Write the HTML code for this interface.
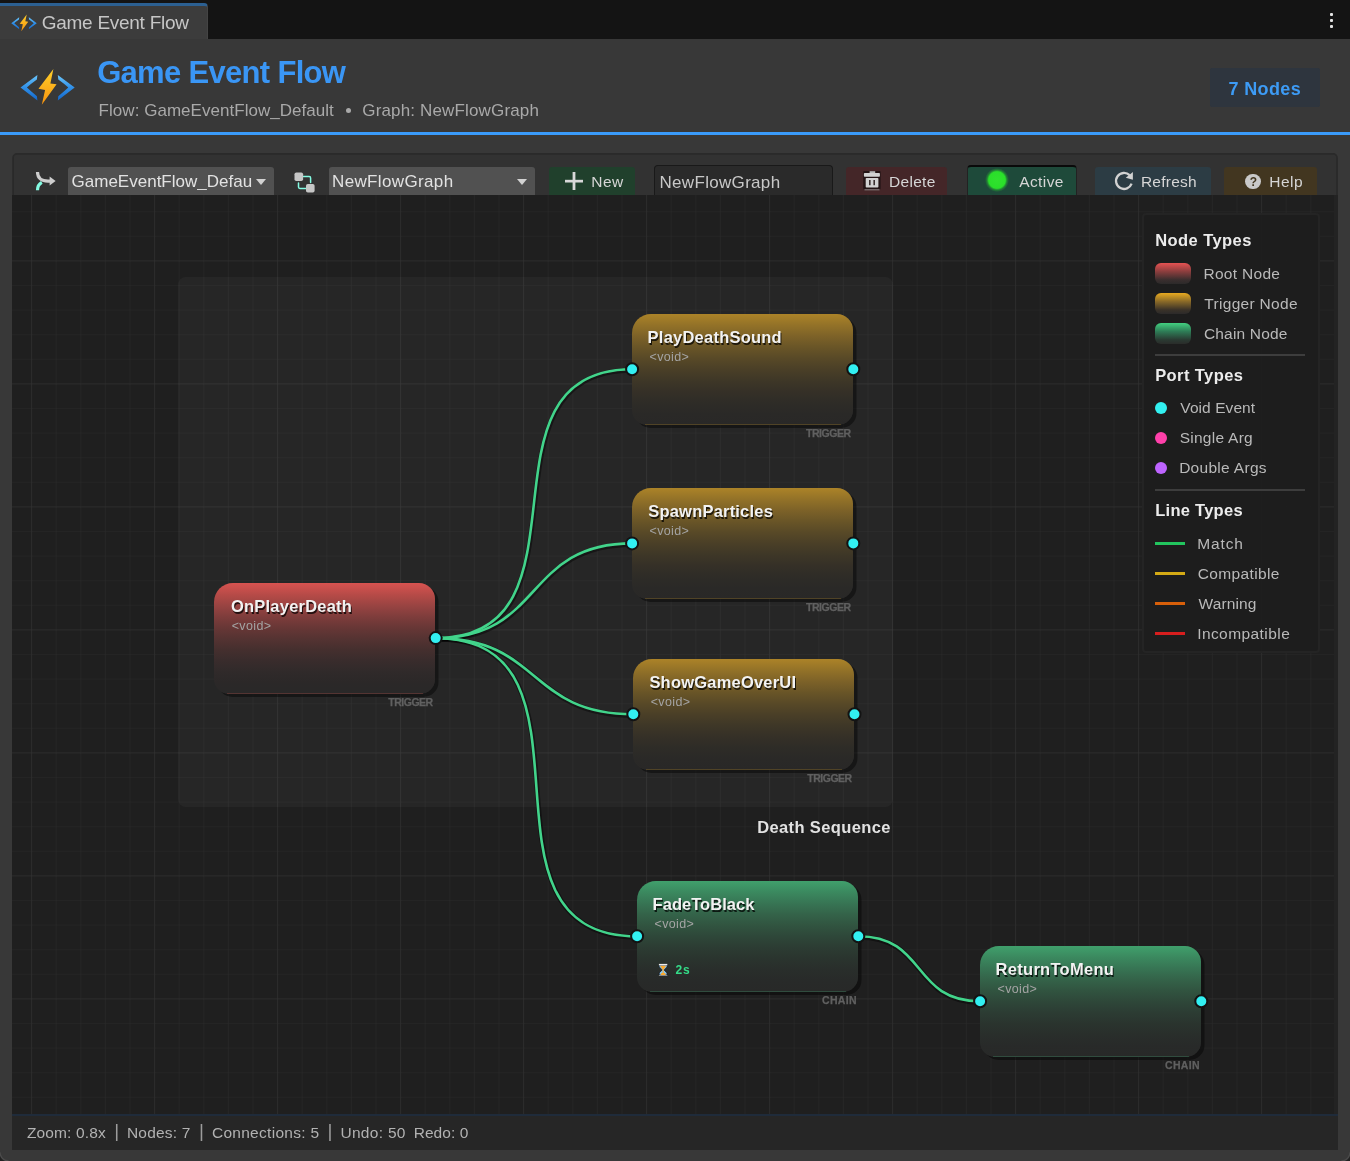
<!DOCTYPE html>
<html><head><meta charset="utf-8"><title>Game Event Flow</title>
<style>
*{box-sizing:border-box;margin:0;padding:0}
html,body{width:1350px;height:1161px;overflow:hidden;background:#383838;font-family:"Liberation Sans", sans-serif;}
#root{position:absolute;left:0;top:0;width:1350px;height:1161px;will-change:transform}
.abs{position:absolute}
.t{position:absolute;white-space:pre;line-height:1}
#tabbar{position:absolute;left:0;top:0;width:1350px;height:39px;background:#141414}
#tab{position:absolute;left:0;top:3px;width:208px;height:36px;background:#3c3c3c;border-top:3px solid #2c6092;border-right:1px solid #444;border-top-right-radius:4px}
#blue{position:absolute;left:0;top:132px;width:1350px;height:3px;background:#3a9bfa}
#badge{position:absolute;left:1210px;top:68px;width:110px;height:39px;background:#2e353e;border-radius:2px}
#panel{position:absolute;left:12.2px;top:153px;width:1325.7px;height:60px;background:#323232;border:1.7px solid #2a2a2a;border-bottom:none;border-radius:4.5px 4.5px 0 0}
#canvas{position:absolute;left:12.2px;top:194.8px;width:1325.9px;height:920px;background-color:#1f1f1f;overflow:hidden;border-right:4px solid #232323}
#status{position:absolute;left:12px;top:1114px;width:1326px;height:36px;background:#262626;border-top:2px solid #1f2b3a}
#group{position:absolute;left:178px;top:277px;width:715px;height:530px;background:rgba(255,255,255,0.035);border-radius:8px}
.node{position:absolute;width:221px;height:111px;border-radius:19px 16px 15px 15px;box-shadow:3.5px 3px 0.6px rgba(0,0,0,0.42)}
.nb{position:absolute;left:13px;right:12.5px;bottom:0;height:1px}
.port{position:absolute;width:15px;height:15px;border-radius:50%;background:#30f0f2;border:2.2px solid #131313}
.edges{position:absolute;left:0;top:0}
#legend{position:absolute;left:1142px;top:213px;width:178px;height:440px;background:rgba(29,29,29,0.93);border:2px solid #242424;border-radius:4px}
.sw{position:absolute;left:1155px;width:36px;height:21px;border-radius:6px}
.dot{position:absolute;left:1155px;width:12.4px;height:12.4px;border-radius:50%}
.ln{position:absolute;left:1155px;width:30px;height:3px}
.sep{position:absolute;left:1155px;width:150px;height:2px;background:#3d3d3d}
.btn{position:absolute;top:167px;height:28px;border-radius:3px 3px 0 0}
.bar{position:absolute;top:1123px;width:1.6px;height:18px;background:#a0a0a0}
</style></head><body><div id="root">
<div id="tabbar"></div>
<div id="tab"></div>
<svg style="position:absolute;left:11.0px;top:13.5px" width="26" height="17.7" viewBox="20.5 68 55.2 37.6">
<defs>
<linearGradient id="sb" x1="0" y1="0" x2="0" y2="1"><stop offset="0" stop-color="#ffd02a"/><stop offset="1" stop-color="#f7930f"/></linearGradient>
<linearGradient id="sc" x1="0" y1="0" x2="0" y2="1"><stop offset="0" stop-color="#6cc6fa"/><stop offset="0.5" stop-color="#2f8fe8"/><stop offset="1" stop-color="#1466c8"/></linearGradient>
</defs>
<path fill="url(#sc)" d="M37.9,75.1 L21,87.6 L37.9,100.6 L37.4,96.2 Q31,91 27.4,87.6 Q31,84.2 37.4,79.6 Z"/>
<path fill="url(#sc)" d="M58.3,75.1 L75.2,87.6 L58.3,100.6 L58.8,96.2 Q65.2,91 68.8,87.6 Q65.2,84.2 58.8,79.6 Z"/>
<path fill="url(#sb)" d="M53.9,68.9 L39,88.8 L45.6,90 L42.3,104.8 L57.1,84.3 L50.9,83.4 Z"/>
</svg>
<div class="t" id="tabt" style="left:41.74px;top:13px;font-size:19.0px;color:#c6c6c6;letter-spacing:-0.271px">Game Event Flow</div>
<div class="abs" style="left:1330.3px;top:13px;width:3px;height:3px;background:#e4e4e4;border-radius:1px"></div>
<div class="abs" style="left:1330.3px;top:19px;width:3px;height:3px;background:#e4e4e4;border-radius:1px"></div>
<div class="abs" style="left:1330.3px;top:25px;width:3px;height:3px;background:#e4e4e4;border-radius:1px"></div>
<svg style="position:absolute;left:19.7px;top:67.8px" width="55.2" height="37.6" viewBox="20.5 68 55.2 37.6">
<defs>
<linearGradient id="lb" x1="0" y1="0" x2="0" y2="1"><stop offset="0" stop-color="#ffd02a"/><stop offset="1" stop-color="#f7930f"/></linearGradient>
<linearGradient id="lc" x1="0" y1="0" x2="0" y2="1"><stop offset="0" stop-color="#6cc6fa"/><stop offset="0.5" stop-color="#2f8fe8"/><stop offset="1" stop-color="#1466c8"/></linearGradient>
</defs>
<path fill="url(#lc)" d="M37.9,75.1 L21,87.6 L37.9,100.6 L37.4,96.2 Q31,91 27.4,87.6 Q31,84.2 37.4,79.6 Z"/>
<path fill="url(#lc)" d="M58.3,75.1 L75.2,87.6 L58.3,100.6 L58.8,96.2 Q65.2,91 68.8,87.6 Q65.2,84.2 58.8,79.6 Z"/>
<path fill="url(#lb)" d="M53.9,68.9 L39,88.8 L45.6,90 L42.3,104.8 L57.1,84.3 L50.9,83.4 Z"/>
</svg>
<div class="t" id="title" style="left:97.13px;top:57px;font-size:31.0px;color:#3a96f5;letter-spacing:-0.685px;font-weight:700">Game Event Flow</div>
<div class="t" id="sub1" style="left:98.61px;top:102px;font-size:17.0px;color:#a9a9a9;letter-spacing:0.034px">Flow: GameEventFlow_Default</div>
<div class="t" id="sub2" style="left:362.25px;top:102px;font-size:17.0px;color:#a9a9a9;letter-spacing:0.156px">Graph: NewFlowGraph</div>
<div class="abs" style="left:345.8px;top:108.2px;width:5px;height:5px;border-radius:50%;background:#a9a9a9"></div>
<div id="badge"></div>
<div class="t" id="badget" style="left:1228.53px;top:80px;font-size:18.0px;color:#3d9bf5;letter-spacing:0.363px;font-weight:700">7 Nodes</div>
<div id="blue"></div>
<svg class="abs" style="left:0;top:140px" width="1350" height="80" viewBox="0 140 1350 80"><rect x="13.05" y="153.85" width="1324" height="80" rx="4" fill="#323232" stroke="#2a2a2a" stroke-width="1.7"/></svg>
<div class="btn" style="left:68px;width:206px;background:#515151"></div>
<div class="t" id="dd1" style="left:71.55px;top:173px;font-size:17.0px;color:#e2e2e2;letter-spacing:0.006px;width:180.1px;overflow:hidden">GameEventFlow_Default</div>
<div class="abs" style="left:256px;top:179px;width:0;height:0;border-left:5.3px solid transparent;border-right:5.3px solid transparent;border-top:6.6px solid #d2d2d2"></div>
<div class="btn" style="left:329.3px;width:205.7px;background:#515151"></div>
<div class="t" id="dd2" style="left:332.01px;top:173px;font-size:17.0px;color:#e2e2e2;letter-spacing:0.358px">NewFlowGraph</div>
<div class="abs" style="left:516.8px;top:179px;width:0;height:0;border-left:5.5px solid transparent;border-right:5.5px solid transparent;border-top:6.7px solid #d2d2d2"></div>
<div class="btn" style="left:549px;width:86px;background:#20402c"></div>
<div class="t" id="bnew" style="left:591.33px;top:174px;font-size:15.5px;color:#d6d6d6;letter-spacing:0.409px">New</div>
<div class="btn" style="left:654.3px;top:165px;width:179px;height:30px;background:#2a2a2a;border:1.6px solid #191919;border-bottom:none;border-radius:4px 4px 0 0"></div>
<div class="t" id="tf" style="left:659.51px;top:174px;font-size:17.0px;color:#c8c8c8;letter-spacing:0.313px">NewFlowGraph</div>
<div class="btn" style="left:846px;width:101px;background:#442628"></div>
<div class="t" id="bdel" style="left:888.93px;top:174px;font-size:15.5px;color:#d6d6d6;letter-spacing:0.330px">Delete</div>
<div class="btn" style="left:966.6px;top:165px;width:110.3px;height:30px;background:#1e4a3a;border-top:2px solid #0a0a0a;border-left:1.5px solid #222;border-right:1px solid #222;border-radius:4px 4px 0 0"></div>
<div class="abs" style="left:984.7px;top:168.4px;width:24px;height:24px;border-radius:50%;background:radial-gradient(circle,#30e22e 0,#2adf2a 8.3px,rgba(42,223,42,0.35) 10px,rgba(42,223,42,0) 12px)"></div>
<div class="t" id="bact" style="left:1019.17px;top:174px;font-size:15.5px;color:#d6d6d6;letter-spacing:0.420px">Active</div>
<div class="btn" style="left:1095px;width:116.2px;background:#2c3c44"></div>
<div class="t" id="bref" style="left:1140.93px;top:174px;font-size:15.5px;color:#d6d6d6;letter-spacing:0.233px">Refresh</div>
<div class="btn" style="left:1223.9px;width:93.4px;background:#423620"></div>
<div class="abs" style="left:1245.4px;top:173.5px;width:15.2px;height:15.2px;border-radius:50%;background:#c9c9c9"></div>
<div class="t" style="left:1249.7px;top:175.5px;font-size:12px;font-weight:700;color:#423620">?</div>
<div class="t" id="bhelp" style="left:1269.33px;top:174px;font-size:15.5px;color:#d6d6d6;letter-spacing:0.477px">Help</div>

<svg class="abs" style="left:28px;top:164px" width="40" height="31" viewBox="28 164 40 31">
<path d="M37.5,172 C37.5,178 41.5,181.2 48,181.2 L50.5,181.2" fill="none" stroke="#cdcdcd" stroke-width="3.2"/>
<path d="M49.6,176.6 L55.6,181.1 L49.6,185.6 Z" fill="#cdcdcd"/>
<path d="M37.5,190.2 C37.5,186.5 39,184 41.8,182.4" fill="none" stroke="#84fbe2" stroke-width="3.2"/>
</svg>
<svg class="abs" style="left:284px;top:164px" width="40" height="31" viewBox="284 164 40 31">
<path d="M303,176.6 H309.2 Q310.6,176.6 310.6,178 V182.6" fill="none" stroke="#84fbe2" stroke-width="1.5" stroke-linecap="round"/>
<path d="M298.5,183 V187 Q298.5,188.4 299.9,188.4 H306.2" fill="none" stroke="#84fbe2" stroke-width="1.5" stroke-linecap="round"/>
<rect x="294.5" y="172.4" width="8.6" height="8.6" rx="1.8" fill="#c6c6c6"/>
<rect x="306" y="184" width="8.6" height="8.6" rx="1.8" fill="#c6c6c6"/>
</svg>
<svg class="abs" style="left:560px;top:168px" width="30" height="27" viewBox="560 168 30 27">
<rect x="565" y="179.8" width="18" height="2.7" fill="#d8d8d8"/><rect x="572.6" y="172" width="2.8" height="18" fill="#d8d8d8"/>
</svg>
<svg class="abs" style="left:860px;top:168px" width="24" height="27" viewBox="860 168 24 27">
<rect x="863.2" y="171" width="17.4" height="18.6" rx="1" fill="rgba(10,5,5,0.55)"/>
<rect x="869.6" y="171.2" width="5.6" height="2.5" fill="#b8b8b8"/>
<rect x="863.9" y="172.9" width="16" height="3.8" rx="0.8" fill="#d2d2d2"/>
<rect x="865.7" y="177.9" width="12.7" height="9.6" rx="0.8" fill="#d2d2d2"/>
<rect x="869" y="180" width="1.6" height="5.2" fill="#3a3030"/><rect x="873.4" y="180" width="1.6" height="5.2" fill="#3a3030"/>
<rect x="864.5" y="189.3" width="15" height="1" fill="#8a8484"/>
</svg>
<svg class="abs" style="left:1110px;top:168px" width="28" height="27" viewBox="1110 168 28 27">
<path d="M1129.6,175.2 A8,8 0 1 0 1131.6,183.6" fill="none" stroke="#d2d2d2" stroke-width="2.3"/>
<path d="M1132.9,172 L1132.9,179.8 L1125.8,177.7 Z" fill="#d2d2d2"/>
</svg>

<div id="canvas"><svg width="1326" height="920" style="position:absolute;left:0;top:0">
<defs>
<pattern id="gmin" x="19.1" y="16.2" width="24.6" height="24.6" patternUnits="userSpaceOnUse"><path d="M0,0 V24.6 M0,0 H24.6" stroke="#2a2a2a" stroke-width="1" fill="none"/></pattern>
<pattern id="gmaj" x="19.1" y="65.4" width="123" height="123" patternUnits="userSpaceOnUse"><path d="M0,0 V123 M0,0 H123" stroke="#323232" stroke-width="1" fill="none"/></pattern>
</defs>
<rect width="1326" height="920" fill="url(#gmin)"/><rect width="1326" height="920" fill="url(#gmaj)"/></svg></div>
<div id="group"></div>
<div class="t" id="gl" style="left:757.20px;top:819px;font-size:16.5px;color:#e2e2e2;letter-spacing:0.376px;font-weight:700">Death Sequence</div>
<svg class="edges" width="1350" height="1161" viewBox="0 0 1350 1161"><path d="M435.7,638.1 C602.2,638.1 465.6,369.3 632.1,369.3" fill="none" stroke="rgba(0,0,0,0.42)" stroke-width="5" transform="translate(0.6,1)"/><path d="M435.7,638.1 C544.7,638.1 523.1,543.4 632.1,543.4" fill="none" stroke="rgba(0,0,0,0.42)" stroke-width="5" transform="translate(0.6,1)"/><path d="M435.7,638.1 C541.6,638.1 527.4,714.3 633.3,714.3" fill="none" stroke="rgba(0,0,0,0.42)" stroke-width="5" transform="translate(0.6,1)"/><path d="M435.7,638.1 C615.6,638.1 457.2,936.3 637.1,936.3" fill="none" stroke="rgba(0,0,0,0.42)" stroke-width="5" transform="translate(0.6,1)"/><path d="M858.3,936.3 C927.3,936.3 911.1,1001.3 980.1,1001.3" fill="none" stroke="rgba(0,0,0,0.42)" stroke-width="5" transform="translate(0.6,1)"/><path d="M435.7,638.1 C602.2,638.1 465.6,369.3 632.1,369.3" fill="none" stroke="#42d48b" stroke-width="2.6"/><path d="M435.7,638.1 C544.7,638.1 523.1,543.4 632.1,543.4" fill="none" stroke="#42d48b" stroke-width="2.6"/><path d="M435.7,638.1 C541.6,638.1 527.4,714.3 633.3,714.3" fill="none" stroke="#42d48b" stroke-width="2.6"/><path d="M435.7,638.1 C615.6,638.1 457.2,936.3 637.1,936.3" fill="none" stroke="#42d48b" stroke-width="2.6"/><path d="M858.3,936.3 C927.3,936.3 911.1,1001.3 980.1,1001.3" fill="none" stroke="#42d48b" stroke-width="2.6"/></svg>
<div class="node" style="left:214.3px;top:583px;background:linear-gradient(to bottom,rgb(217,83,80) 0%,rgb(184,75,72) 10%,rgb(154,68,66) 20%,rgb(127,61,60) 30%,rgb(104,55,54) 40%,rgb(85,51,50) 50%,rgb(69,47,46) 60%,rgb(57,44,44) 70%,rgb(48,42,42) 80%,rgb(43,40,40) 90%,rgb(41,40,40) 100%)"><div class="nb" style="background:rgba(150,70,66,0.4)"></div></div><div class="t" id="nt_OnPlayerDeath" style="left:231.02px;top:598px;font-size:16.5px;color:#f2f2f2;letter-spacing:0.209px;font-weight:700;text-shadow:1px 1.5px 0 rgba(0,0,0,0.75)">OnPlayerDeath</div>
<div class="t" id="nv_OnPlayerDeath" style="left:231.68px;top:620px;font-size:12.5px;color:#a4a4a4;letter-spacing:0.379px">&lt;void&gt;</div>
<div class="t" id="nl_OnPlayerDeath" style="left:388.28px;top:697px;font-size:10.5px;color:#606060;letter-spacing:-0.485px;font-weight:700;-webkit-text-stroke:0.25px #606060">TRIGGER</div><div class="node" style="left:632.1px;top:314px;background:linear-gradient(to bottom,rgb(172,131,40) 0%,rgb(147,114,40) 10%,rgb(125,98,40) 20%,rgb(105,85,39) 30%,rgb(88,73,39) 40%,rgb(74,63,39) 50%,rgb(62,55,39) 60%,rgb(53,48,39) 70%,rgb(46,44,39) 80%,rgb(42,41,39) 90%,rgb(41,40,39) 100%)"><div class="nb" style="background:rgba(150,116,40,0.36)"></div></div><div class="t" id="nt_PlayDeathSound" style="left:647.60px;top:329px;font-size:16.5px;color:#f2f2f2;letter-spacing:0.229px;font-weight:700;text-shadow:1px 1.5px 0 rgba(0,0,0,0.75)">PlayDeathSound</div>
<div class="t" id="nv_PlayDeathSound" style="left:649.48px;top:351px;font-size:12.5px;color:#a4a4a4;letter-spacing:0.379px">&lt;void&gt;</div>
<div class="t" id="nl_PlayDeathSound" style="left:806.08px;top:428px;font-size:10.5px;color:#606060;letter-spacing:-0.485px;font-weight:700;-webkit-text-stroke:0.25px #606060">TRIGGER</div><div class="node" style="left:632.1px;top:488.1px;background:linear-gradient(to bottom,rgb(172,131,40) 0%,rgb(147,114,40) 10%,rgb(125,98,40) 20%,rgb(105,85,39) 30%,rgb(88,73,39) 40%,rgb(74,63,39) 50%,rgb(62,55,39) 60%,rgb(53,48,39) 70%,rgb(46,44,39) 80%,rgb(42,41,39) 90%,rgb(41,40,39) 100%)"><div class="nb" style="background:rgba(150,116,40,0.36)"></div></div><div class="t" id="nt_SpawnParticles" style="left:648.22px;top:503px;font-size:16.5px;color:#f2f2f2;letter-spacing:0.205px;font-weight:700;text-shadow:1px 1.5px 0 rgba(0,0,0,0.75)">SpawnParticles</div>
<div class="t" id="nv_SpawnParticles" style="left:649.48px;top:525px;font-size:12.5px;color:#a4a4a4;letter-spacing:0.379px">&lt;void&gt;</div>
<div class="t" id="nl_SpawnParticles" style="left:806.08px;top:602px;font-size:10.5px;color:#606060;letter-spacing:-0.485px;font-weight:700;-webkit-text-stroke:0.25px #606060">TRIGGER</div><div class="node" style="left:633.3px;top:659px;background:linear-gradient(to bottom,rgb(172,131,40) 0%,rgb(147,114,40) 10%,rgb(125,98,40) 20%,rgb(105,85,39) 30%,rgb(88,73,39) 40%,rgb(74,63,39) 50%,rgb(62,55,39) 60%,rgb(53,48,39) 70%,rgb(46,44,39) 80%,rgb(42,41,39) 90%,rgb(41,40,39) 100%)"><div class="nb" style="background:rgba(150,116,40,0.36)"></div></div><div class="t" id="nt_ShowGameOverUI" style="left:649.42px;top:674px;font-size:16.5px;color:#f2f2f2;letter-spacing:0.208px;font-weight:700;text-shadow:1px 1.5px 0 rgba(0,0,0,0.75)">ShowGameOverUI</div>
<div class="t" id="nv_ShowGameOverUI" style="left:650.68px;top:696px;font-size:12.5px;color:#a4a4a4;letter-spacing:0.379px">&lt;void&gt;</div>
<div class="t" id="nl_ShowGameOverUI" style="left:807.28px;top:773px;font-size:10.5px;color:#606060;letter-spacing:-0.485px;font-weight:700;-webkit-text-stroke:0.25px #606060">TRIGGER</div><div class="node" style="left:637.1px;top:881px;background:linear-gradient(to bottom,rgb(64,160,108) 0%,rgb(59,137,95) 10%,rgb(55,117,84) 20%,rgb(52,99,73) 30%,rgb(49,84,64) 40%,rgb(46,71,57) 50%,rgb(44,60,51) 60%,rgb(42,52,46) 70%,rgb(41,46,43) 80%,rgb(40,42,41) 90%,rgb(40,41,40) 100%)"><div class="nb" style="background:rgba(60,130,95,0.4)"></div></div><div class="t" id="nt_FadeToBlack" style="left:652.60px;top:896px;font-size:16.5px;color:#f2f2f2;letter-spacing:0.030px;font-weight:700;text-shadow:1px 1.5px 0 rgba(0,0,0,0.75)">FadeToBlack</div>
<div class="t" id="nv_FadeToBlack" style="left:654.48px;top:918px;font-size:12.5px;color:#a4a4a4;letter-spacing:0.379px">&lt;void&gt;</div>
<div class="t" id="nl_FadeToBlack" style="left:822.07px;top:995px;font-size:10.5px;color:#606060;letter-spacing:0.297px;font-weight:700;-webkit-text-stroke:0.25px #606060">CHAIN</div><div class="node" style="left:980.1px;top:946px;background:linear-gradient(to bottom,rgb(64,160,108) 0%,rgb(59,137,95) 10%,rgb(55,117,84) 20%,rgb(52,99,73) 30%,rgb(49,84,64) 40%,rgb(46,71,57) 50%,rgb(44,60,51) 60%,rgb(42,52,46) 70%,rgb(41,46,43) 80%,rgb(40,42,41) 90%,rgb(40,41,40) 100%)"><div class="nb" style="background:rgba(60,130,95,0.4)"></div></div><div class="t" id="nt_ReturnToMenu" style="left:995.60px;top:961px;font-size:16.5px;color:#f2f2f2;letter-spacing:0.282px;font-weight:700;text-shadow:1px 1.5px 0 rgba(0,0,0,0.75)">ReturnToMenu</div>
<div class="t" id="nv_ReturnToMenu" style="left:997.48px;top:983px;font-size:12.5px;color:#a4a4a4;letter-spacing:0.379px">&lt;void&gt;</div>
<div class="t" id="nl_ReturnToMenu" style="left:1165.07px;top:1060px;font-size:10.5px;color:#606060;letter-spacing:0.297px;font-weight:700;-webkit-text-stroke:0.25px #606060">CHAIN</div>
<svg class="abs" style="left:658px;top:963px" width="11" height="14" viewBox="-0.9 -0.9 11 14">
<path d="M0.3,1.4 H8.1 V3 L5.1,6 L8.1,9 V11.2 H0.3 V9 L3.3,6 L0.3,3 Z" fill="#84c6f4" stroke="#15151c" stroke-width="0.7"/>
<path d="M1.2,1.8 H7.2 L4.8,5.6 H3.6 Z" fill="#fdaa2c"/>
<rect x="3.65" y="5.4" width="1.1" height="3.6" fill="#fdaa2c"/>
<path d="M1.9,11 H6.6 V9.7 L4.2,8.6 L1.9,9.7 Z" fill="#fdaa2c"/>
<rect x="0" y="0" width="8.4" height="1.5" fill="#ececec"/>
<rect x="0" y="11.2" width="8.4" height="0.8" fill="#a4a4a4"/>
</svg>
<div class="t" id="d2s" style="left:675.58px;top:964px;font-size:12.0px;color:#34dc88;letter-spacing:0.649px;font-weight:700">2s</div>
<svg class="edges" width="1350" height="1161" viewBox="0 0 1350 1161"><circle cx="435.7" cy="638.1" r="6" fill="#32f0f2" stroke="#131313" stroke-width="2"/><circle cx="632.1" cy="369.3" r="6" fill="#32f0f2" stroke="#131313" stroke-width="2"/><circle cx="853.3" cy="369.3" r="6" fill="#32f0f2" stroke="#131313" stroke-width="2"/><circle cx="632.1" cy="543.4" r="6" fill="#32f0f2" stroke="#131313" stroke-width="2"/><circle cx="853.3" cy="543.4" r="6" fill="#32f0f2" stroke="#131313" stroke-width="2"/><circle cx="633.3" cy="714.3" r="6" fill="#32f0f2" stroke="#131313" stroke-width="2"/><circle cx="854.5" cy="714.3" r="6" fill="#32f0f2" stroke="#131313" stroke-width="2"/><circle cx="637.1" cy="936.3" r="6" fill="#32f0f2" stroke="#131313" stroke-width="2"/><circle cx="858.3" cy="936.3" r="6" fill="#32f0f2" stroke="#131313" stroke-width="2"/><circle cx="980.1" cy="1001.3" r="6" fill="#32f0f2" stroke="#131313" stroke-width="2"/><circle cx="1201.3" cy="1001.3" r="6" fill="#32f0f2" stroke="#131313" stroke-width="2"/></svg>
<div id="legend"></div>
<div class="t" id="lh1" style="left:1155.20px;top:232px;font-size:16.5px;color:#ececec;letter-spacing:0.432px;font-weight:700">Node Types</div>
<div class="sw" style="top:263px;background:linear-gradient(#e65252,#8c3e3e 40%,#3a2e2e 80%,#2c2a2a)"></div>
<div class="sw" style="top:293px;background:linear-gradient(#e8aa20,#8a6a28 40%,#3a3228 80%,#2c2a2a)"></div>
<div class="sw" style="top:323px;background:linear-gradient(#42d080,#2e7c56 40%,#2a3a32 80%,#2a2c2a)"></div>
<div class="t" id="li1" style="left:1203.43px;top:266px;font-size:15.5px;color:#b9b9b9;letter-spacing:0.306px">Root Node</div>
<div class="t" id="li2" style="left:1204.35px;top:296px;font-size:15.5px;color:#b9b9b9;letter-spacing:0.304px">Trigger Node</div>
<div class="t" id="li3" style="left:1203.91px;top:326px;font-size:15.5px;color:#b9b9b9;letter-spacing:0.180px">Chain Node</div>
<div class="sep" style="top:354px"></div>
<div class="t" id="lh2" style="left:1155.20px;top:367px;font-size:16.5px;color:#ececec;letter-spacing:0.415px;font-weight:700">Port Types</div>
<div class="dot" style="top:401.8px;background:#32f0f0"></div>
<div class="dot" style="top:431.8px;background:#ff40aa"></div>
<div class="dot" style="top:461.8px;background:#be64ff"></div>
<div class="t" id="li4" style="left:1180.33px;top:400px;font-size:15.5px;color:#b9b9b9;letter-spacing:0.075px">Void Event</div>
<div class="t" id="li5" style="left:1179.70px;top:430px;font-size:15.5px;color:#b9b9b9;letter-spacing:0.259px">Single Arg</div>
<div class="t" id="li6" style="left:1179.13px;top:460px;font-size:15.5px;color:#b9b9b9;letter-spacing:0.298px">Double Args</div>
<div class="sep" style="top:489px"></div>
<div class="t" id="lh3" style="left:1155.20px;top:502px;font-size:16.5px;color:#ececec;letter-spacing:0.268px;font-weight:700">Line Types</div>
<div class="ln" style="top:541.5px;background:#22c55e"></div>
<div class="ln" style="top:571.5px;background:#d4aa15"></div>
<div class="ln" style="top:601.5px;background:#d75f0a"></div>
<div class="ln" style="top:631.5px;background:#d71e1e"></div>
<div class="t" id="li7" style="left:1197.33px;top:536px;font-size:15.5px;color:#b9b9b9;letter-spacing:0.840px">Match</div>
<div class="t" id="li8" style="left:1197.81px;top:566px;font-size:15.5px;color:#b9b9b9;letter-spacing:0.363px">Compatible</div>
<div class="t" id="li9" style="left:1198.53px;top:596px;font-size:15.5px;color:#b9b9b9;letter-spacing:0.135px">Warning</div>
<div class="t" id="li10" style="left:1197.17px;top:626px;font-size:15.5px;color:#b9b9b9;letter-spacing:0.430px">Incompatible</div>
<div id="status"></div>
<div class="t" id="st1" style="left:26.91px;top:1125px;font-size:15.5px;color:#b2b2b2;letter-spacing:0.147px">Zoom: 0.8x</div>
<div class="t" id="st2" style="left:126.93px;top:1125px;font-size:15.5px;color:#b2b2b2;letter-spacing:0.201px">Nodes: 7</div>
<div class="t" id="st3" style="left:211.91px;top:1125px;font-size:15.5px;color:#b2b2b2;letter-spacing:0.287px">Connections: 5</div>
<div class="t" id="st4" style="left:340.40px;top:1125px;font-size:15.5px;color:#b2b2b2;letter-spacing:0.311px">Undo: 50</div>
<div class="t" id="st5" style="left:413.63px;top:1125px;font-size:15.5px;color:#b2b2b2;letter-spacing:0.080px">Redo: 0</div>
<div class="t" id="bar0" style="left:114.23px;top:1121px;font-size:19px;color:#9c9c9c;letter-spacing:0.000px">|</div>
<div class="t" id="bar1" style="left:199.03px;top:1121px;font-size:19px;color:#9c9c9c;letter-spacing:0.000px">|</div>
<div class="t" id="bar2" style="left:327.53px;top:1121px;font-size:19px;color:#9c9c9c;letter-spacing:0.000px">|</div>
<svg class="abs" style="left:1336px;top:1147px" width="14" height="14" viewBox="1336 1147 14 14"><path d="M1350,1152 A9,9 0 0 1 1341,1161 H1350 Z" fill="#222"/><path d="M1350,1152.3 A8.7,8.7 0 0 1 1341.3,1161" fill="none" stroke="#4b4b4b" stroke-width="1.3"/></svg>
<svg class="abs" style="left:0;top:1147px" width="14" height="14" viewBox="0 1147 14 14"><path d="M0,1152 A9,9 0 0 0 9,1161 H0 Z" fill="#222"/><path d="M0,1152.3 A8.7,8.7 0 0 0 8.7,1161" fill="none" stroke="#4b4b4b" stroke-width="1.3"/></svg>
</div></body></html>
